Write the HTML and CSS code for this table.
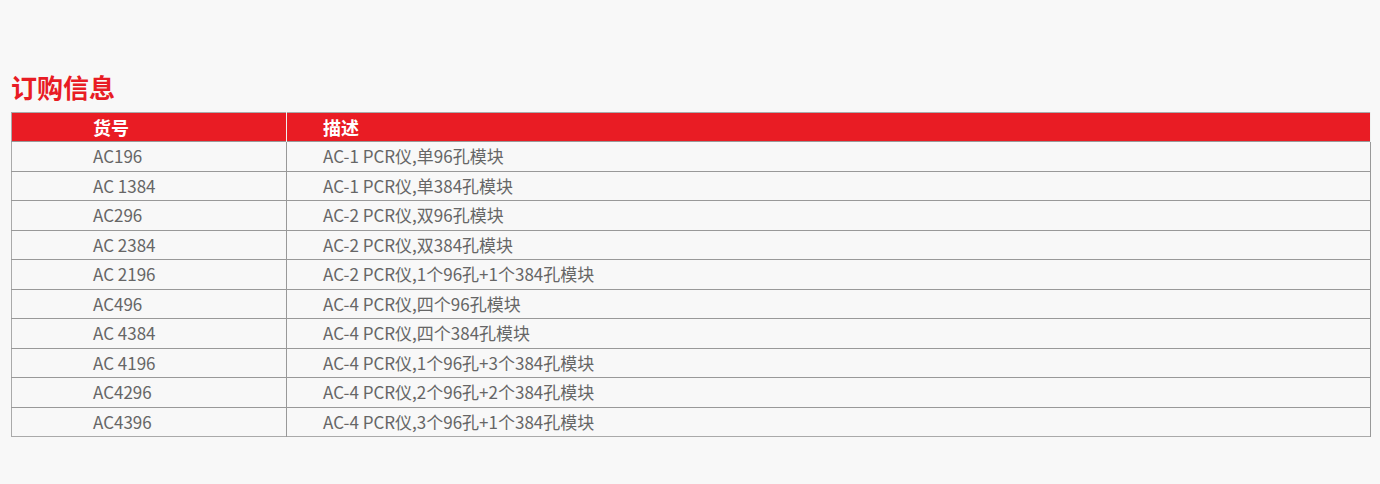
FILE: index.html
```html
<!DOCTYPE html>
<html lang="zh">
<head>
<meta charset="utf-8">
<link rel="stylesheet" href="styles.css">
</head>
<body>
<div class="page">
  <h2 class="title">订购信息</h2>
  <table class="order">
    <thead>
      <tr><th class="c1">货号</th><th class="c2">描述</th></tr>
    </thead>
    <tbody>
      <tr><td class="c1">AC196</td><td class="c2">AC-1 PCR仪,单96孔模块</td></tr>
      <tr><td class="c1">AC 1384</td><td class="c2">AC-1 PCR仪,单384孔模块</td></tr>
      <tr><td class="c1">AC296</td><td class="c2">AC-2 PCR仪,双96孔模块</td></tr>
      <tr><td class="c1">AC 2384</td><td class="c2">AC-2 PCR仪,双384孔模块</td></tr>
      <tr><td class="c1">AC 2196</td><td class="c2">AC-2 PCR仪,1个96孔+1个384孔模块</td></tr>
      <tr><td class="c1">AC496</td><td class="c2">AC-4 PCR仪,四个96孔模块</td></tr>
      <tr><td class="c1">AC 4384</td><td class="c2">AC-4 PCR仪,四个384孔模块</td></tr>
      <tr><td class="c1">AC 4196</td><td class="c2">AC-4 PCR仪,1个96孔+3个384孔模块</td></tr>
      <tr><td class="c1">AC4296</td><td class="c2">AC-4 PCR仪,2个96孔+2个384孔模块</td></tr>
      <tr><td class="c1">AC4396</td><td class="c2">AC-4 PCR仪,3个96孔+1个384孔模块</td></tr>
    </tbody>
  </table>
</div>
</body>
</html>
```
FILE: styles.css
```css
html, body {
  margin: 0;
  padding: 0;
  background: #f8f8f8;
}
body {
  font-family: "Noto Sans CJK SC", "Noto Sans", sans-serif;
  color: #666;
}
.page {
  padding: 69px 10px 0 11px;
}
.title {
  margin: 0 0 8px 0;
  font-size: 26px;
  line-height: 35px;
  font-weight: 700;
  color: #e81c24;
}
.order {
  width: 1360px;
  border-collapse: collapse;
  border: 1px solid #aaa;
  font-size: 17px;
}
.order th {
  background: #e91c24;
  color: #fff;
  font-weight: 700;
  font-size: 18px;
  text-align: left;
  height: 28px;
  padding: 0;
  line-height: 28px;
  border-right: 1px solid #f0f0f0;
}
.order td {
  height: 28.5px;
  padding: 0;
  line-height: 28px;
  border-top: 1px solid #999;
  border-right: 1px solid #999;
}
.order .c1 {
  width: 193px;
  padding-left: 81px;
}
.order .c2 {
  padding-left: 36px;
}
```
